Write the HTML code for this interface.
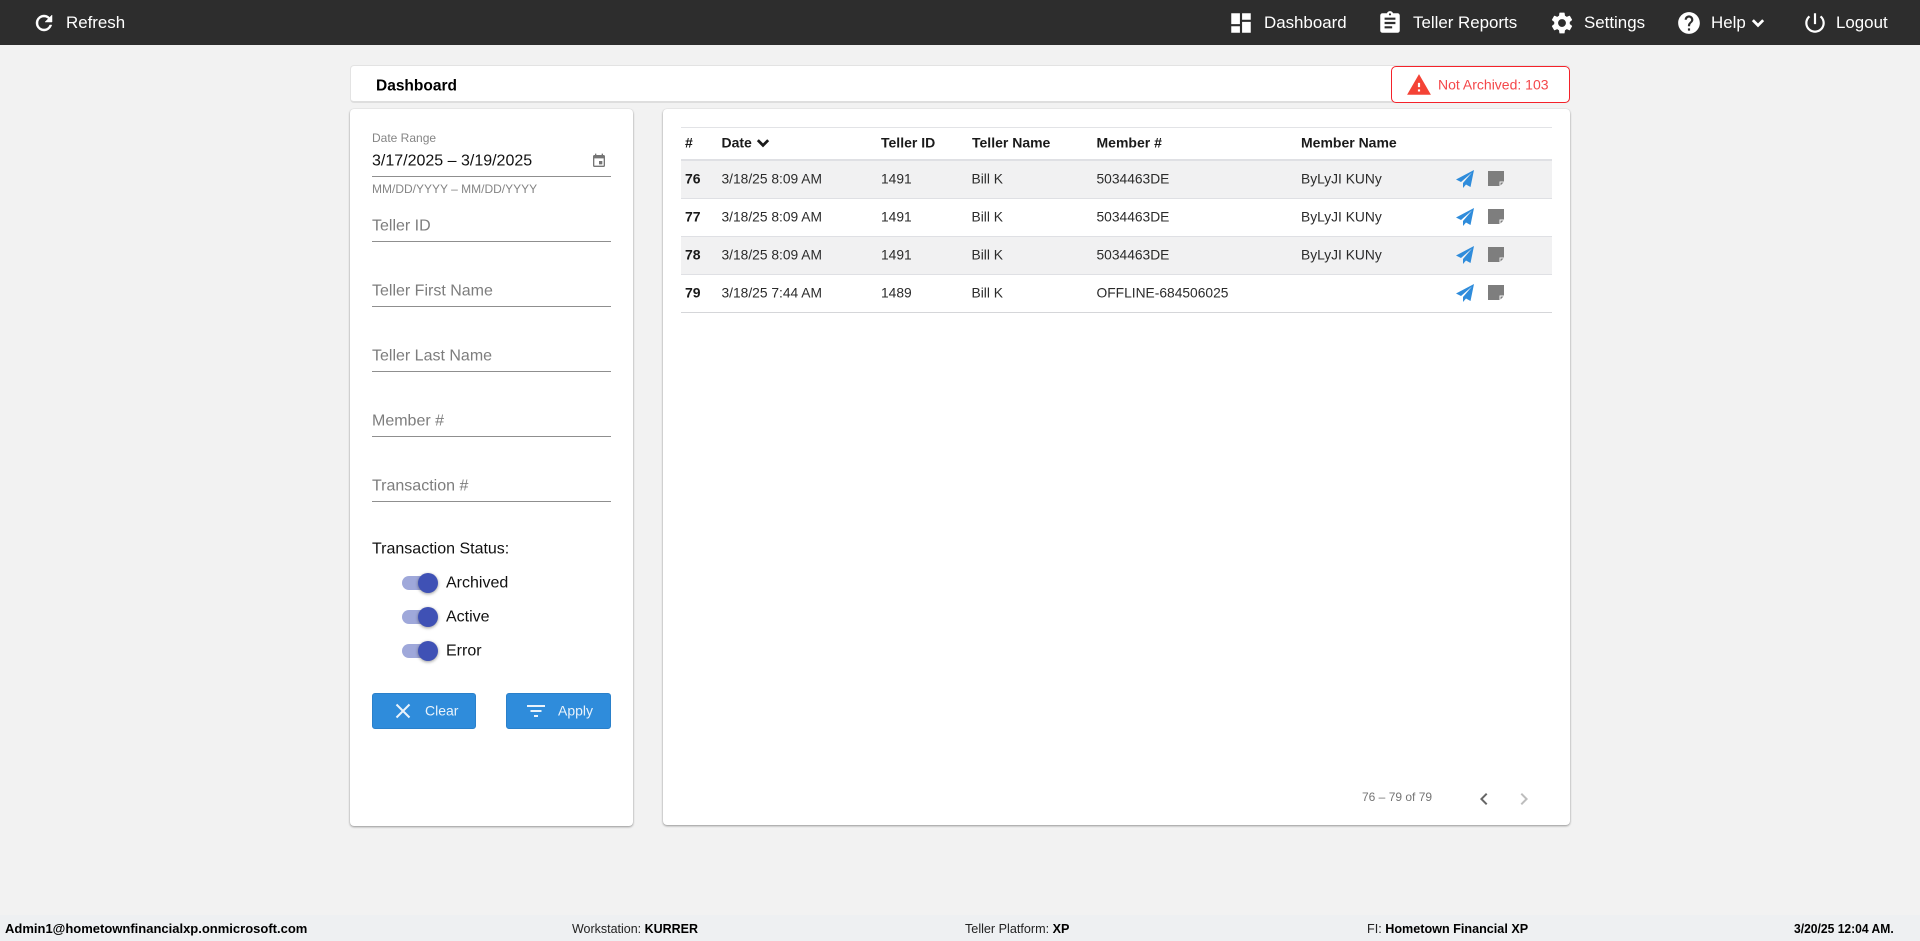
<!DOCTYPE html>
<html><head><meta charset="utf-8"><title>Dashboard</title>
<style>
html,body{margin:0;padding:0;width:1920px;height:941px;overflow:hidden;background:#f2f2f2;font-family:"Liberation Sans",sans-serif;}
.a{position:absolute;white-space:nowrap;}
.t{position:absolute;white-space:nowrap;transform:translateY(-50%);line-height:1.2;}
svg{position:absolute;display:block;}
#top{position:absolute;left:0;top:0;width:1920px;height:45px;background:#2d2d2d;}
.nav{color:#fff;font-size:16.9px;}
.card{position:absolute;background:#fff;border-radius:4px;box-shadow:0 1px 2px rgba(0,0,0,.38),0 0 1px rgba(0,0,0,.1);}
.lbl{color:#7d7d7d;font-size:16px;left:372px;}
.ul{position:absolute;left:372px;width:239px;height:1px;background:#8f8f8f;}
.track{position:absolute;left:402px;width:34px;height:14px;border-radius:7px;background:#9fa8da;}
.thumb{position:absolute;left:418px;width:20px;height:20px;border-radius:50%;background:#3f51b5;box-shadow:0 1px 3px rgba(0,0,0,.4);}
.sw{font-size:16px;color:#111;left:446px;}
.btn{position:absolute;top:693px;height:36px;box-sizing:border-box;background:#2f8cdb;border:1px solid #2a80ca;border-radius:3px;}
.btxt{color:#eaf3fb;font-size:14px;top:711px;}
.row{position:absolute;left:681px;width:871px;height:37px;border-bottom:1px solid #dfe0e4;}
.th{font-size:14px;font-weight:bold;color:#1a1a1a;top:143px;}
.td{font-size:13.8px;color:#2b2b2b;}
.b{font-weight:bold;font-size:14px;color:#1a1a1a;}
.ft{font-size:13px;color:#222;top:929px;transform:translateY(-50%);transform-origin:left center;}
.ft b{color:#000;}
</style></head><body>

<div id="top"></div>
<svg style="left:32px;top:11px" width="24" height="24" viewBox="0 0 24 24" fill="#fff" stroke="#fff" stroke-width=".5"><path d="M17.65 6.35C16.2 4.9 14.21 4 12 4c-4.42 0-7.99 3.58-7.99 8s3.57 8 7.99 8c3.73 0 6.84-2.55 7.73-6h-2.08c-.82 2.33-3.04 4-5.65 4-3.31 0-6-2.69-6-6s2.69-6 6-6c1.66 0 3.14.69 4.22 1.78L13 11h7V4l-2.35 2.35z"/></svg>
<div class="t nav" style="left:66px;top:23px">Refresh</div>

<svg style="left:1228px;top:10px" width="26" height="26" viewBox="0 0 24 24" fill="#fff"><path d="M3 13h8V3H3v10zm0 8h8v-6H3v6zm10 0h8V11h-8v10zm0-18v6h8V3h-8z"/></svg>
<div class="t nav" style="left:1264px;top:23px">Dashboard</div>
<svg style="left:1377px;top:10px" width="26" height="26" viewBox="0 0 24 24" fill="#fff"><path d="M19 3h-4.18C14.4 1.84 13.3 1 12 1c-1.3 0-2.4.84-2.82 2H5c-1.1 0-2 .9-2 2v14c0 1.1.9 2 2 2h14c1.1 0 2-.9 2-2V5c0-1.1-.9-2-2-2zm-7 0c.55 0 1 .45 1 1s-.45 1-1 1-1-.45-1-1 .45-1 1-1zm2 14H7v-2h7v2zm3-4H7v-2h10v2zm0-4H7V7h10v2z"/></svg>
<div class="t nav" style="left:1413px;top:23px">Teller Reports</div>
<svg style="left:1549px;top:10px" width="26" height="26" viewBox="0 0 24 24" fill="#fff"><path d="M19.14 12.94c.04-.3.06-.61.06-.94 0-.32-.02-.64-.07-.94l2.03-1.58c.18-.14.23-.41.12-.61l-1.92-3.32c-.12-.22-.37-.29-.59-.22l-2.39.96c-.5-.38-1.03-.7-1.62-.94l-.36-2.54c-.04-.24-.24-.41-.48-.41h-3.84c-.24 0-.43.17-.47.41l-.36 2.54c-.59.24-1.13.57-1.62.94l-2.39-.96c-.22-.08-.47 0-.59.22L2.74 8.87c-.12.21-.08.47.12.61l2.03 1.58c-.05.3-.09.63-.09.94s.02.64.07.94l-2.03 1.58c-.18.14-.23.41-.12.61l1.92 3.32c.12.22.37.29.59.22l2.39-.96c.5.38 1.03.7 1.62.94l.36 2.54c.05.24.24.41.48.41h3.84c.24 0 .44-.17.47-.41l.36-2.54c.59-.24 1.13-.56 1.62-.94l2.39.96c.22.08.47 0 .59-.22l1.92-3.32c.12-.22.07-.47-.12-.61l-2.01-1.58zM12 15.6c-1.98 0-3.6-1.62-3.6-3.6s1.62-3.6 3.6-3.6 3.6 1.62 3.6 3.6-1.62 3.6-3.6 3.6z"/></svg>
<div class="t nav" style="left:1584px;top:23px">Settings</div>
<svg style="left:1676px;top:10px" width="26" height="26" viewBox="0 0 24 24" fill="#fff"><path d="M12 2C6.48 2 2 6.48 2 12s4.48 10 10 10 10-4.48 10-10S17.52 2 12 2zm1 17h-2v-2h2v2zm2.07-7.75l-.9.92C13.45 12.9 13 13.5 13 15h-2v-.5c0-1.1.45-2.1 1.17-2.83l1.24-1.26c.37-.36.59-.86.59-1.41 0-1.1-.9-2-2-2s-2 .9-2 2H8c0-2.21 1.79-4 4-4s4 1.79 4 4c0 .88-.36 1.68-.93 2.25z"/></svg>
<div class="t nav" style="left:1711px;top:23px">Help</div>
<svg style="left:1747px;top:12px" width="22" height="22" viewBox="0 0 24 24" fill="#fff"><path d="M7.41 8.59L12 13.17l4.59-4.58L18 10l-6 6-6-6 1.41-1.41z" stroke="#fff" stroke-width="1"/></svg>
<svg style="left:1802px;top:10px" width="26" height="26" viewBox="0 0 24 24" fill="#fff"><path d="M13 3h-2v10h2V3zm4.83 2.17l-1.42 1.42C17.99 7.86 19 9.81 19 12c0 3.87-3.13 7-7 7s-7-3.13-7-7c0-2.19 1.01-4.14 2.58-5.42L6.17 5.17C4.23 6.82 3 9.26 3 12c0 4.97 4.03 9 9 9s9-4.03 9-9c0-2.74-1.23-5.18-3.17-6.83z"/></svg>
<div class="t nav" style="left:1836px;top:23px">Logout</div>

<div class="a" style="left:350px;top:65px;width:1220px;height:38px;background:#fff;border:1px solid #e3e3e3;border-bottom:2px solid #dedede;border-radius:4px;box-sizing:border-box;"></div>
<div class="t" style="left:376px;top:87px;font-size:15.5px;font-weight:bold;color:#000">Dashboard</div>
<div class="a" style="left:1391px;top:66px;width:179px;height:37px;box-sizing:border-box;background:#fff;border:1.5px solid #f4222a;border-radius:5px;"></div>
<svg style="left:1406px;top:72px" width="26" height="26" viewBox="0 0 24 24" fill="#f44336"><path d="M1 21h22L12 2 1 21zm12-3h-2v-2h2v2zm0-4h-2v-4h2v4z"/></svg>
<div class="t" style="left:1438px;top:85px;font-size:14px;color:#f4474a">Not Archived: 103</div>

<div class="card" style="left:350px;top:109px;width:283px;height:717px"></div>
<div class="t" style="left:372px;top:138px;font-size:12px;color:#858585">Date Range</div>
<div class="t" style="left:372px;top:161px;font-size:16px;color:#111">3/17/2025 – 3/19/2025</div>
<svg style="left:591px;top:153px" width="16" height="16" viewBox="0 0 24 24" fill="#757575"><path d="M17 12h-5v5h5v-5zM16 1v2H8V1H6v2H5c-1.11 0-1.99.9-1.99 2L3 19c0 1.1.89 2 2 2h14c1.1 0 2-.9 2-2V5c0-1.1-.9-2-2-2h-1V1h-2zm3 18H5V8h14v11z"/></svg>
<div class="ul" style="top:176px"></div>
<div class="t" style="left:372px;top:189px;font-size:12px;color:#858585">MM/DD/YYYY – MM/DD/YYYY</div>

<div class="t lbl" style="top:226px">Teller ID</div><div class="ul" style="top:241px"></div>
<div class="t lbl" style="top:291px">Teller First Name</div><div class="ul" style="top:306px"></div>
<div class="t lbl" style="top:356px">Teller Last Name</div><div class="ul" style="top:371px"></div>
<div class="t lbl" style="top:421px">Member #</div><div class="ul" style="top:436px"></div>
<div class="t lbl" style="top:486px">Transaction #</div><div class="ul" style="top:501px"></div>

<div class="t" style="left:372px;top:549px;font-size:16px;color:#111">Transaction Status:</div>
<div class="track" style="top:576px"></div><div class="thumb" style="top:573px"></div><div class="t sw" style="top:583px">Archived</div>
<div class="track" style="top:610px"></div><div class="thumb" style="top:607px"></div><div class="t sw" style="top:617px">Active</div>
<div class="track" style="top:644px"></div><div class="thumb" style="top:641px"></div><div class="t sw" style="top:651px">Error</div>

<div class="btn" style="left:372px;width:104px"></div>
<svg style="left:391px;top:699px" width="24" height="24" viewBox="0 0 24 24" fill="none" stroke="#eaf3fb" stroke-width="2"><path d="M5.5 5.5l13 13M18.500 5.500l-13 13"/></svg>
<div class="t btxt" style="left:425px">Clear</div>
<div class="btn" style="left:506px;width:105px"></div>
<svg style="left:524px;top:699px" width="24" height="24" viewBox="0 0 24 24" fill="#eaf3fb"><path d="M3 6h18v2H3zM6.500 11h11v2h-11zM10 16h4v2h-4z"/></svg>
<div class="t btxt" style="left:558px">Apply</div>

<div class="card" style="left:663px;top:109px;width:907px;height:716px"></div>
<div class="a" style="left:681px;top:127px;width:871px;height:1px;background:#e2e3e6"></div>
<div class="t th" style="left:685px">#</div>
<div class="t th" style="left:721.5px">Date</div>
<svg style="left:752px;top:132px" width="22" height="22" viewBox="0 0 24 24" fill="#1a1a1a"><path d="M7.410 8.590L12 13.170l4.590-4.580L18 10l-6 6-6-6 1.410-1.410z" stroke="#1a1a1a" stroke-width="1"/></svg>
<div class="t th" style="left:881px">Teller ID</div>
<div class="t th" style="left:972px">Teller Name</div>
<div class="t th" style="left:1096.500px">Member #</div>
<div class="t th" style="left:1301px">Member Name</div>
<div class="a" style="left:681px;top:159px;width:871px;height:2px;background:#dfe0e4"></div>

<div class="row" style="top:161px;background:#f1f1f2"></div>
<div class="row" style="top:199px"></div>
<div class="row" style="top:237px;background:#f1f1f2"></div>
<div class="row" style="top:275px;border-bottom-color:#d5d6d9"></div>

<div class="t b" style="left:685px;top:179px">76</div><div class="t td" style="left:721.5px;top:180px">3/18/25 8:09 AM</div><div class="t td" style="left:881px;top:180px">1491</div><div class="t td" style="left:971.5px;top:180px">Bill K</div><div class="t td" style="left:1096.5px;top:180px">5034463DE</div><div class="t td" style="left:1301px;top:180px">ByLyJI KUNy</div>
<div class="t b" style="left:685px;top:217px">77</div><div class="t td" style="left:721.5px;top:218px">3/18/25 8:09 AM</div><div class="t td" style="left:881px;top:218px">1491</div><div class="t td" style="left:971.5px;top:218px">Bill K</div><div class="t td" style="left:1096.5px;top:218px">5034463DE</div><div class="t td" style="left:1301px;top:218px">ByLyJI KUNy</div>
<div class="t b" style="left:685px;top:255px">78</div><div class="t td" style="left:721.5px;top:256px">3/18/25 8:09 AM</div><div class="t td" style="left:881px;top:256px">1491</div><div class="t td" style="left:971.5px;top:256px">Bill K</div><div class="t td" style="left:1096.5px;top:256px">5034463DE</div><div class="t td" style="left:1301px;top:256px">ByLyJI KUNy</div>
<div class="t b" style="left:685px;top:293px">79</div><div class="t td" style="left:721.5px;top:294px">3/18/25 7:44 AM</div><div class="t td" style="left:881px;top:294px">1489</div><div class="t td" style="left:971.5px;top:294px">Bill K</div><div class="t td" style="left:1096.5px;top:294px">OFFLINE-684506025</div>

<svg style="left:1456px;top:170px" width="18" height="18" viewBox="0 0 18 18" fill="#2f8cdb"><path d="M18 0L0 9.500l5 2.500L16 2.500 7 13v5l3-3.500 4.500 2.500z"/></svg>
<svg style="left:1488px;top:171px" width="16" height="15" viewBox="0 0 16 15"><path d="M0 0h16v10.500h-4.500V15H0z" fill="#7e7e7e"/><path d="M12.500 11.500h3l-3 3z" fill="#7e7e7e"/></svg>
<svg style="left:1456px;top:208px" width="18" height="18" viewBox="0 0 18 18" fill="#2f8cdb"><path d="M18 0L0 9.500l5 2.500L16 2.500 7 13v5l3-3.500 4.500 2.500z"/></svg>
<svg style="left:1488px;top:209px" width="16" height="15" viewBox="0 0 16 15"><path d="M0 0h16v10.500h-4.500V15H0z" fill="#7e7e7e"/><path d="M12.500 11.500h3l-3 3z" fill="#7e7e7e"/></svg>
<svg style="left:1456px;top:246px" width="18" height="18" viewBox="0 0 18 18" fill="#2f8cdb"><path d="M18 0L0 9.500l5 2.500L16 2.500 7 13v5l3-3.500 4.500 2.500z"/></svg>
<svg style="left:1488px;top:247px" width="16" height="15" viewBox="0 0 16 15"><path d="M0 0h16v10.500h-4.500V15H0z" fill="#7e7e7e"/><path d="M12.500 11.500h3l-3 3z" fill="#7e7e7e"/></svg>
<svg style="left:1456px;top:284px" width="18" height="18" viewBox="0 0 18 18" fill="#2f8cdb"><path d="M18 0L0 9.500l5 2.500L16 2.500 7 13v5l3-3.500 4.500 2.500z"/></svg>
<svg style="left:1488px;top:285px" width="16" height="15" viewBox="0 0 16 15"><path d="M0 0h16v10.500h-4.500V15H0z" fill="#7e7e7e"/><path d="M12.500 11.500h3l-3 3z" fill="#7e7e7e"/></svg>

<div class="t" style="left:1362px;top:797px;font-size:12px;color:#757575">76 – 79 of 79</div>
<svg style="left:1472px;top:787px" width="24" height="24" viewBox="0 0 24 24" fill="#666"><path d="M15.410 7.410L14 6l-6 6 6 6 1.410-1.410L10.830 12z"/></svg>
<svg style="left:1512px;top:787px" width="24" height="24" viewBox="0 0 24 24" fill="#bdbdbd"><path d="M10 6L8.590 7.410 13.170 12l-4.580 4.590L10 18l6-6z"/></svg>

<div class="a" style="left:0;top:915px;width:1920px;height:26px;background:#eef0f2"></div>
<div class="t ft" style="left:5px"><b>Admin1@hometownfinancialxp.onmicrosoft.com</b></div>
<div class="t ft" style="left:572px;transform:translateY(-50%) scaleX(.96)">Workstation: <b>KURRER</b></div>
<div class="t ft" style="left:965px;transform:translateY(-50%) scaleX(.97)">Teller Platform: <b>XP</b></div>
<div class="t ft" style="left:1367px;transform:translateY(-50%) scaleX(.97)">FI: <b>Hometown Financial XP</b></div>
<div class="t ft" style="left:1794px;transform:translateY(-50%) scaleX(.93)"><b>3/20/25 12:04 AM.</b></div>

</body></html>
